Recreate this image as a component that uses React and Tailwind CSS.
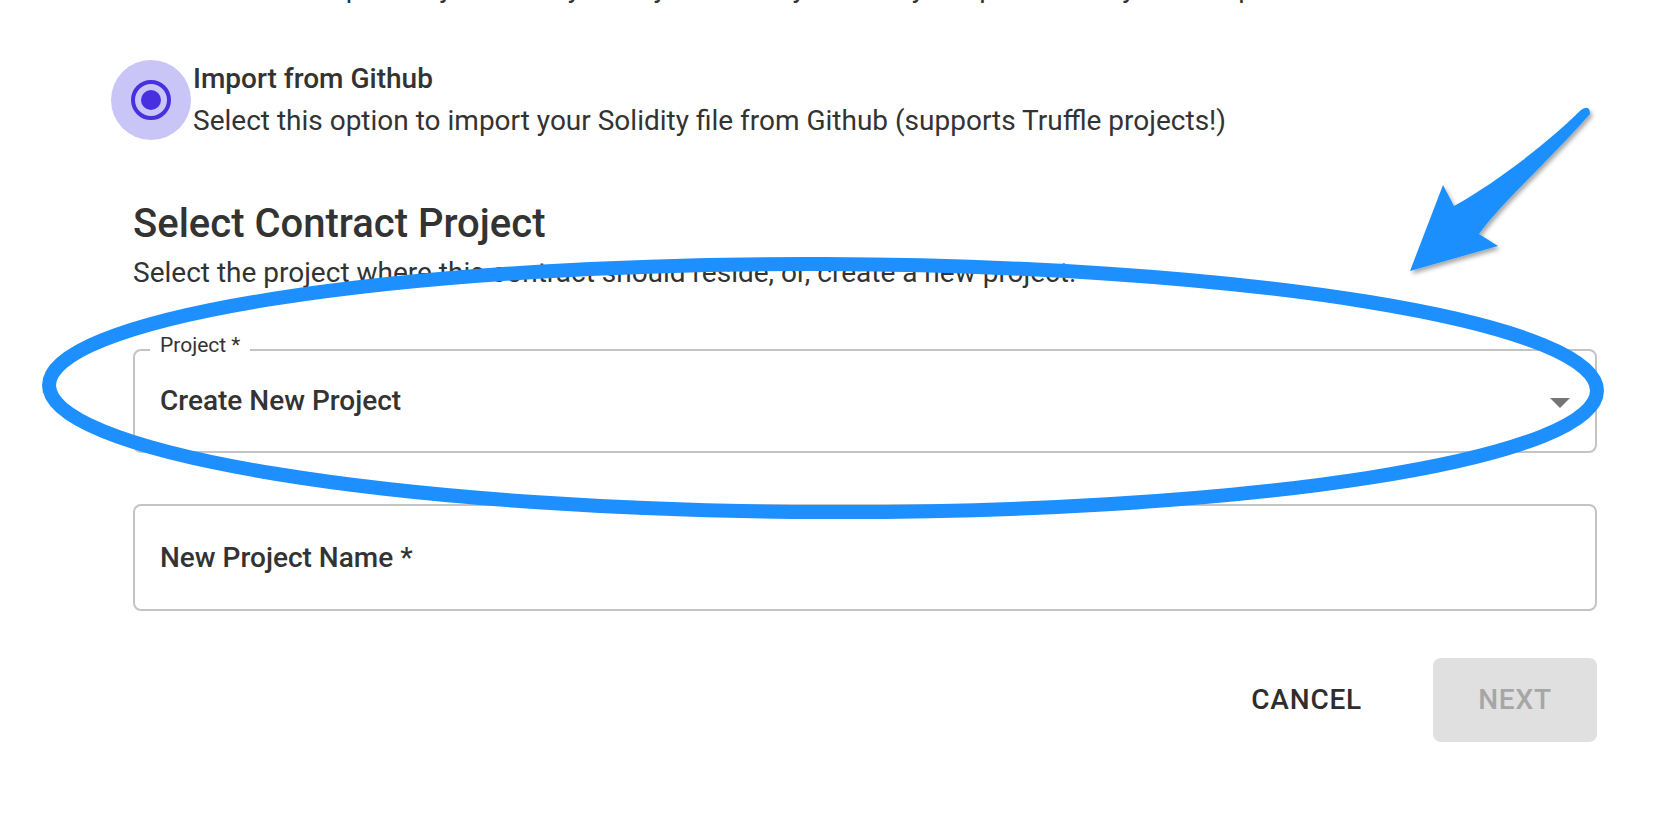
import React from "react";

function RadioChecked() {
  return (
    <div className="w-[80px] h-[80px] shrink-0 rounded-full bg-[#c9c5f7] flex items-center justify-center">
      <svg width="48" height="48" viewBox="0 0 24 24">
        <circle cx="12" cy="12" r="9" fill="none" stroke="#4a2fe0" strokeWidth="2" />
        <circle cx="12" cy="12" r="5" fill="#4a2fe0" />
      </svg>
    </div>
  );
}

function Annotation() {
  return (
    <svg
      className="absolute inset-0 w-[1654px] h-[814px] pointer-events-none"
      viewBox="0 0 1654 814"
    >
      <defs>
        <filter id="sh" x="-20%" y="-20%" width="140%" height="140%">
          <feDropShadow dx="2" dy="3" stdDeviation="2" floodColor="#000" floodOpacity="0.35" />
        </filter>
      </defs>
      <ellipse
        cx="823"
        cy="388"
        rx="774"
        ry="124"
        fill="none"
        stroke="#1e8fff"
        strokeWidth="14"
        transform="rotate(0.2 823 388)"
      />
      <path
        filter="url(#sh)"
        fill="#1e8fff"
        d="M1410 271 L1443 185 L1454 206 C1490 186 1540 150 1581 110 Q1590 104 1590 114 C1548 162 1502 202 1479 234 L1498 246 Z"
      />
    </svg>
  );
}

export default function App() {
  return (
    <div className="relative w-[1654px] h-[814px] overflow-hidden bg-white font-['Roboto',sans-serif] text-[#333333]">
      <div className="flex flex-col pl-[133px] pr-[57px]">
        <div className="-mt-[33px] pl-[60px] text-[28px] leading-[42px] whitespace-nowrap">
          Select this option if you already have your Solidity file ready to upload from your computer.
        </div>

        <div className="mt-[49px] -ml-[22px] flex items-center gap-[2px]">
          <RadioChecked />
          <div className="flex flex-col">
            <div className="text-[28px] leading-[42px] font-medium">Import from Github</div>
            <div className="text-[28px] leading-[42px]">
              Select this option to import your Solidity file from Github (supports Truffle projects!)
            </div>
          </div>
        </div>

        <div className="mt-[58px] text-[40px] leading-[48px] font-medium">Select Contract Project</div>
        <div className="mt-[4px] text-[28px] leading-[42px]">
          Select the project where this contract should reside, or, create a new project.
        </div>

        <div className="relative mt-[55px] h-[104px] rounded-[8px] border-2 border-[#c4c4c4] flex items-center pl-[25px] pr-[25px]">
          <span className="absolute left-[15px] -top-[16px] bg-white px-[10px] text-[21px] leading-[21px]">
            Project *
          </span>
          <span className="flex-1 text-[28px] leading-[36px] font-medium">Create New Project</span>
          <svg width="20" height="10" viewBox="0 0 20 10" className="mt-[4px]">
            <path d="M0 0 L20 0 L10 10 Z" fill="#757575" />
          </svg>
        </div>

        <div className="mt-[51px] h-[107px] rounded-[8px] border-2 border-[#c4c4c4] flex items-center pl-[25px]">
          <span className="text-[28px] leading-[36px] font-medium">New Project Name *</span>
        </div>

        <div className="mt-[47px] flex justify-end items-center gap-[40px]">
          <button className="h-[84px] px-[31px] text-[28px] font-medium tracking-[0.8px] uppercase text-[#2e2e2e]">
            Cancel
          </button>
          <button className="h-[84px] w-[164px] rounded-[8px] bg-[#e0e0e0] text-[28px] font-medium tracking-[0.8px] uppercase text-[#a6a6a6]">
            Next
          </button>
        </div>
      </div>
      <Annotation />
    </div>
  );
}
